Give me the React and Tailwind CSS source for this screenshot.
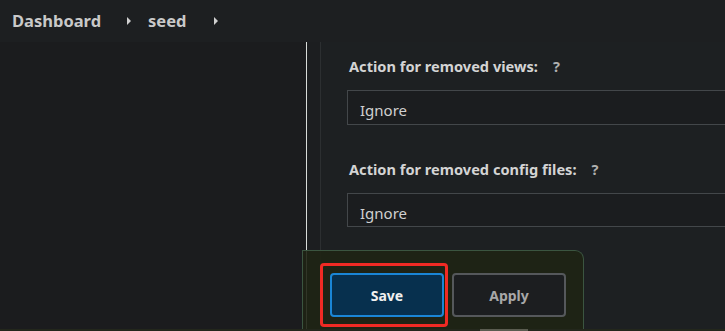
export default function App() {
  const font = { fontFamily: '"Noto Sans", "Open Sans", sans-serif' };
  return (
    <div className="relative h-[331px] w-[725px] overflow-hidden bg-[#1b1c1e] text-[#d6d6d6]" style={font}>
      <div className="flex h-[42px] items-center bg-[#1d1f21] pl-[12px]">
        <span className="text-[16.5px] font-bold text-[#c9c9c9]">Dashboard</span>
        <svg className="ml-[25px]" width="6" height="10" viewBox="0 0 6 10"><path d="M1 1 L5 5 L1 9 Z" fill="#d0d0d0" /></svg>
        <span className="ml-[16px] text-[16.5px] font-bold text-[#c9c9c9]">seed</span>
        <svg className="ml-[26px]" width="6" height="10" viewBox="0 0 6 10"><path d="M1 1 L5 5 L1 9 Z" fill="#d0d0d0" /></svg>
      </div>
      <div className="flex h-[289px]">
        <div className="w-[307px] shrink-0 border-r border-[#d8dcd9]" />
        <div className="w-[14px] shrink-0 border-r border-[#2c2f31] bg-[#1c1e20]" />
        <div className="min-w-0 flex-1 overflow-hidden bg-[#1d2022] pl-[28px] pt-[14px]">
          <div className="flex items-center text-[14.6px] font-bold text-[#d4d4d4]">
            Action for removed views:
            <span className="ml-[15px] text-[#b0b0b0]">?</span>
          </div>
          <div className="-ml-[2px] mt-[12px] h-[35px] w-[420px] border border-[#43474a] bg-[#1b1d1f] pl-[12px] pt-[9px] text-[15px] leading-[20px] text-[#d0d0d0]">
            Ignore
          </div>
          <div className="mt-[34px] flex items-center text-[14.6px] font-bold text-[#d4d4d4]">
            Action for removed config files:
            <span className="ml-[15px] text-[#b0b0b0]">?</span>
          </div>
          <div className="-ml-[2px] mt-[12px] h-[34px] w-[420px] border border-[#43474a] bg-[#1b1d1f] pl-[12px] pt-[9px] text-[15px] leading-[20px] text-[#d0d0d0]">
            Ignore
          </div>
        </div>
      </div>
      <div className="absolute left-[302px] top-[250px] h-[79px] w-[282px] rounded-tr-[9px] border border-b-0 border-[#3b5540] bg-[#1f2414]/90 pl-[17px] pt-[12px]">
        <div className="flex items-center">
          <div className="rounded-[4px] border-[3px] border-[#f02a24] p-[7px] pr-[1px]">
            <button className="flex h-[44px] w-[114px] items-center justify-center rounded-[4px] border-2 border-[#1a86d6] bg-[#07304e] text-[14px] font-bold text-[#f0f0f0]">Save</button>
          </div>
          <button className="ml-[4px] flex h-[44px] w-[114px] items-center justify-center rounded-[4px] border-2 border-[#55585b] bg-[#1c1e20] text-[14px] font-bold text-[#a8a8a8]">Apply</button>
        </div>
      </div>
      <div className="absolute bottom-0 left-0 h-[2px] w-[725px] bg-[#23271c]">
        <div className="ml-[480px] h-[2px] w-[48px] bg-[#5a5c50]" />
      </div>
    </div>
  );
}
